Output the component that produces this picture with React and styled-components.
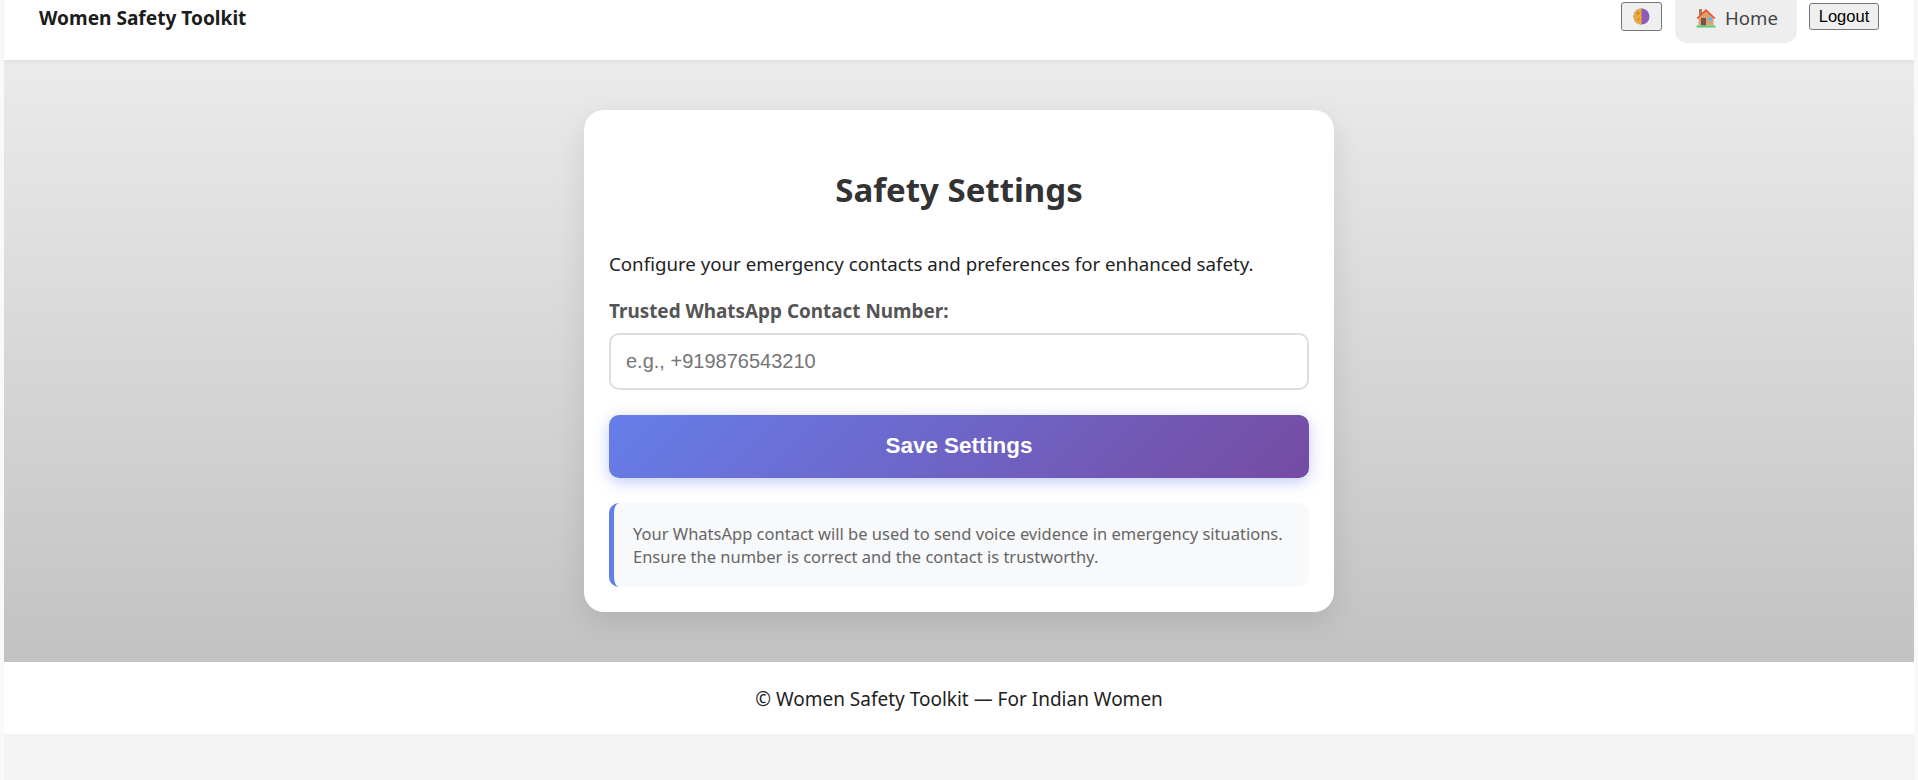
import React from 'react';
import styled, { createGlobalStyle } from 'styled-components';

const GlobalStyle = createGlobalStyle`
  html, body {
    margin: 0;
    height: 100%;
    overflow: hidden;
    background: #f9f9f9;
  }
  body {
    font-family: "Noto Sans", "Open Sans", sans-serif;
  }
`;

const Page = styled.div`
  padding: 0 4px;
`;

const Header = styled.header`
  height: 60px;
  background: #fff;
  padding: 0 35px;
  box-sizing: border-box;
  display: flex;
  justify-content: space-between;
  align-items: flex-start;
  box-shadow: 0 2px 5px rgba(0, 0, 0, 0.06);
  position: relative;
  overflow: hidden;
`;

const Brand = styled.div`
  font-size: 19.1px;
  font-weight: 700;
  color: #1c1c1c;
  line-height: 24px;
  margin-top: 6px;
`;

const Nav = styled.nav`
  display: flex;
  align-items: flex-start;
`;

const NativeButton = styled.button`
  font-family: "Liberation Sans", Arial, sans-serif;
  font-size: 16.5px;
  color: #000;
  background: #efefef;
  border: 1px solid #767676;
  border-radius: 3px;
  padding: 0;
  box-sizing: border-box;
  display: flex;
  align-items: center;
  justify-content: center;
`;

const ThemeButton = styled(NativeButton)`
  width: 41px;
  height: 29px;
  margin-top: 2px;
`;

const LogoutButton = styled(NativeButton)`
  width: 70px;
  height: 27px;
  margin-top: 3px;
  margin-left: 12px;
`;

const HomeLink = styled.a`
  display: flex;
  align-items: center;
  gap: 9px;
  width: 122px;
  height: 43px;
  padding: 0 0 8px 21px;
  margin-left: 13px;
  box-sizing: border-box;
  background: #eeeeee;
  border-radius: 0 0 12px 12px;
  color: #444;
  font-size: 18.6px;
`;

const Main = styled.main`
  height: 602px;
  box-sizing: border-box;
  padding-top: 50px;
  background: linear-gradient(to bottom, #ebebeb, #c2c2c2);
  display: flex;
  justify-content: center;
  align-items: flex-start;
`;

const Card = styled.section`
  width: 750px;
  height: 502px;
  box-sizing: border-box;
  padding: 56px 25px 25px;
  background: #fff;
  border-radius: 20px;
  box-shadow: 0 10px 30px rgba(0, 0, 0, 0.1);
`;

const Title = styled.h1`
  margin: 0;
  text-align: center;
  font-size: 33px;
  line-height: 48px;
  font-weight: 700;
  color: #333;
`;

const Intro = styled.p`
  margin: 35px 0 0;
  font-size: 18.7px;
  line-height: 30px;
  color: #222;
`;

const FieldLabel = styled.label`
  display: block;
  margin-top: 17px;
  font-size: 18.9px;
  line-height: 30px;
  font-weight: 700;
  color: #555;
`;

const PhoneInput = styled.input`
  display: block;
  width: 100%;
  height: 57px;
  margin-top: 7px;
  box-sizing: border-box;
  padding: 0 15px;
  border: 2px solid #ddd;
  border-radius: 10px;
  background: #fff;
  font-family: "Liberation Sans", Arial, sans-serif;
  font-size: 20px;
  &::placeholder {
    color: #757575;
  }
`;

const SaveButton = styled.button`
  display: block;
  width: 100%;
  height: 63px;
  margin-top: 25px;
  padding: 0 0 2px;
  border: none;
  border-radius: 10px;
  background: linear-gradient(135deg, #667eea 0%, #764ba2 100%);
  box-shadow: 0 4px 15px rgba(102, 126, 234, 0.4);
  color: #fff;
  font-family: "Liberation Sans", Arial, sans-serif;
  font-size: 22.4px;
  font-weight: 700;
`;

const InfoBox = styled.div`
  height: 84px;
  margin-top: 25px;
  box-sizing: border-box;
  padding: 19px 19px;
  background: #f8f9fa;
  border-left: 5px solid #667eea;
  border-radius: 10px;
  color: #666;
  font-size: 16.5px;
  line-height: 23px;
  white-space: nowrap;
`;

const Footer = styled.footer`
  height: 72px;
  padding-top: 1px;
  box-sizing: border-box;
  background: #fff;
  display: flex;
  align-items: center;
  justify-content: center;
  font-size: 19px;
  color: #222;
`;

const BottomFill = styled.div`
  height: 46px;
  background: #f3f3f3;
`;

const MoonIcon = () => (
  <svg width="17" height="17" viewBox="0 0 17 17">
    <circle cx="8.5" cy="8.5" r="8" fill="#8e5cb8" />
    <path d="M8.5.5a8 8 0 0 0 0 16z" fill="#eda83c" />
    <circle cx="5" cy="5.5" r="1.4" fill="#c98a2c" />
    <circle cx="5.5" cy="11.5" r="1.1" fill="#c98a2c" />
  </svg>
);

const HouseIcon = () => (
  <svg width="20" height="20" viewBox="0 0 20 20">
    <rect x="3" y="1" width="3" height="6" fill="#b5764f" />
    <path d="M2.5 9L10 2.5 17.5 9v8.5h-15z" fill="#e0a070" />
    <path d="M0.5 10L10 1l9.5 9-1.2 1L10 3.5 1.7 11z" fill="#e4553a" />
    <rect x="5" y="10" width="5" height="7.5" fill="#7a5346" />
    <rect x="12" y="9.5" width="4" height="3.5" fill="#4fc0ee" />
    <rect x="0.5" y="17.5" width="19" height="2" fill="#4cd07d" />
  </svg>
);

export default function App() {
  return (
    <>
      <GlobalStyle />
      <Page>
        <Header>
          <Brand>Women Safety Toolkit</Brand>
          <Nav>
            <ThemeButton aria-label="Toggle theme">
              <MoonIcon />
            </ThemeButton>
            <HomeLink>
              <HouseIcon />
              Home
            </HomeLink>
            <LogoutButton>Logout</LogoutButton>
          </Nav>
        </Header>
        <Main>
          <Card>
            <Title>Safety Settings</Title>
            <Intro>Configure your emergency contacts and preferences for enhanced safety.</Intro>
            <FieldLabel>Trusted WhatsApp Contact Number:</FieldLabel>
            <PhoneInput placeholder="e.g., +919876543210" />
            <SaveButton>Save Settings</SaveButton>
            <InfoBox>
              Your WhatsApp contact will be used to send voice evidence in emergency situations.
              <br />
              Ensure the number is correct and the contact is trustworthy.
            </InfoBox>
          </Card>
        </Main>
        <Footer>© Women Safety Toolkit — For Indian Women</Footer>
        <BottomFill />
      </Page>
    </>
  );
}
